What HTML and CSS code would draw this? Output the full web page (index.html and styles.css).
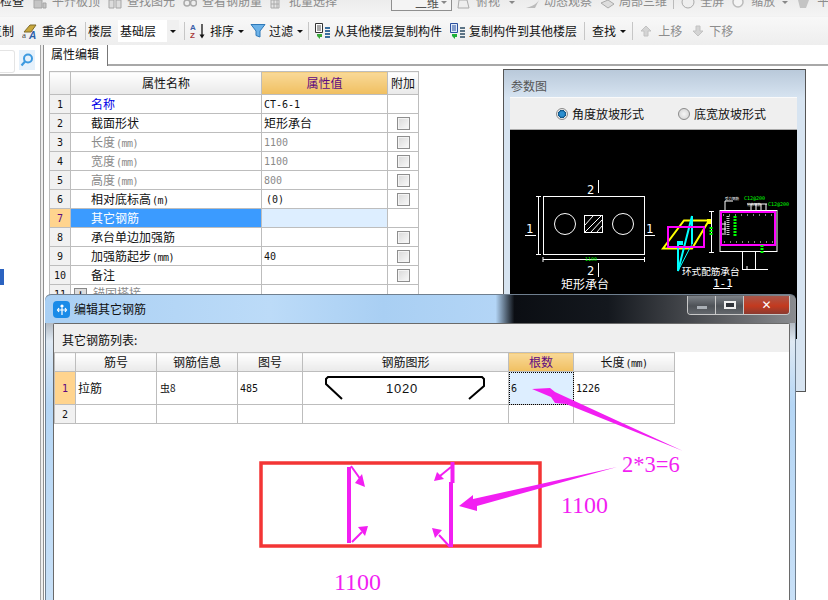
FILE: index.html
```html
<!DOCTYPE html>
<html lang="zh">
<head>
<meta charset="utf-8">
<title>属性编辑</title>
<link rel="stylesheet" href="styles.css">
</head>
<body>
<div class="page">
  <div class="bar-top">
    <span class="t1 dark">检查</span>
    <svg class="gi ml9" viewBox="0 0 14 9"><path d="M1 0h8v8H1zM10 3h3v5h-3z" fill="#c4c4c4" stroke="#a5a5a5"/></svg>
    <span class="t1 ml5">平齐板顶</span>
    <svg class="gi ml8" viewBox="0 0 14 9"><path d="M1 0h5v8H1zM8 0h5v8H8z" fill="#ddd" stroke="#a5a5a5"/></svg>
    <span class="t1 ml5">查找图元</span>
    <svg class="gi ml8" viewBox="0 0 14 9"><circle cx="4" cy="3" r="3" fill="none" stroke="#aaa" stroke-width="1.500"/><circle cx="10.500" cy="3" r="3" fill="none" stroke="#aaa" stroke-width="1.500"/></svg>
    <span class="t1 ml5">查看钢筋量</span>
    <svg class="gi ml8" viewBox="0 0 14 9"><path d="M1 0h8v8H1zM4 0v8M7 0v8M1 4h8" fill="#e4e4e4" stroke="#aaa"/></svg>
    <span class="t1 ml5">批量选择</span>
    <span class="drop-top"><span>二维</span><i class="caret grey"></i></span>
    <svg class="gi ml5" viewBox="0 0 14 9"><path d="M2 0h8l2 8H1z" fill="#eee" stroke="#aaa"/></svg>
    <span class="t1 ml5">俯视</span><i class="caret grey ml9"></i>
    <svg class="gi-w ml9" viewBox="0 0 17 9"><path d="M2 8C6 7 12 5 15 0l-4 8z" fill="#bbb"/></svg>
    <span class="t1 ml3">动态观察</span>
    <svg class="gi-w ml7" viewBox="0 0 17 9"><path d="M2 3 9 0l6 4-6 4z" fill="#ddd" stroke="#aaa"/></svg>
    <span class="t1 ml3">局部三维</span>
    <i class="sep-top"></i>
    <svg class="gi-w ml6" viewBox="0 0 17 9"><circle cx="8" cy="2" r="6" fill="#eee" stroke="#aaa"/></svg>
    <span class="t1 ml3">全屏</span>
    <svg class="gi-w ml7" viewBox="0 0 17 9"><circle cx="7" cy="2" r="5" fill="#f4f4f4" stroke="#bbb" stroke-width="1.500"/></svg>
    <span class="t1 ml3">缩放</span><i class="caret grey ml7"></i>
    <svg class="gi-w ml7" viewBox="0 0 17 9"><path d="M3 0h11l-3 8H5z" fill="#c4c4c4"/></svg>
    <span class="t1 ml5">平移</span>
  </div>

  <div class="bar-tools">
    <span class="clip">复制</span>
    <svg class="ic ml8" viewBox="0 0 16 16"><path d="M2 9 8 2h6l-5 7z" fill="#c9a83c" stroke="#7d6a2a"/><text x="0" y="15" class="ic-a">a</text><text x="7" y="15.500" class="ic-b">A</text></svg>
    <span class="ml4">重命名</span>
    <i class="sep"></i>
    <span class="ml2">楼层</span>
    <span class="combo"><span class="combo-txt">基础层</span><span class="combo-btn"><i class="caret"></i></span></span>
    <i class="sep sep-a"></i>
    <svg class="ic-sort ml5" viewBox="0 0 18 16"><text x="0" y="7" class="az-a">A</text><text x="0" y="15" class="az-z">Z</text><path d="M12 1v12" stroke="#111" stroke-width="1.300"/><path d="M9.500 11.500 12 15.500l2.500-4z" fill="#111"/></svg>
    <span class="ml2">排序</span><i class="caret ml4"></i>
    <svg class="ic ml6" viewBox="0 0 16 16"><path d="M1 1.500h14L10 8v6l-4-1.500V8z" fill="#6cb2e8" stroke="#2f79b8"/></svg>
    <span class="ml3">过滤</span><i class="caret ml4"></i>
    <i class="sep sep-a"></i>
    <svg class="ic-copy ml5" viewBox="0 0 18 18"><path d="M1.500 1.500h7v9h-7z" fill="#fff" stroke="#333"/><path d="M3 4h4M3 6h4M3 8h4" stroke="#555"/><path d="M3 12h5v3H6v2l-3-3z" fill="#3aa83a"/><path d="M11 6h5M11 9h5M11 12h5M11 15h5" stroke="#3c6f9e" stroke-width="2"/></svg>
    <span class="ml2">从其他楼层复制构件</span>
    <svg class="ic-copy ml7" viewBox="0 0 18 18"><path d="M1.500 1.500h7v9h-7z" fill="#dfeaf8" stroke="#2b4f9e"/><path d="M3 4h4M3 6h4M3 8h4" stroke="#2b4f9e"/><path d="M3 12h5v3H6v2l-3-3z" fill="#1fae3a"/><path d="M11 6h5M11 9h5M11 12h5M11 15h5" stroke="#5c7486" stroke-width="2"/></svg>
    <span class="ml2">复制构件到其他楼层</span>
    <i class="sep"></i>
    <span class="ml7">查找</span><i class="caret ml4"></i>
    <i class="sep sep-b"></i>
    <svg class="ic-arrow ml7" viewBox="0 0 12 12"><path d="M6 1 11 6H8v5H4V6H1z" fill="#d4d4d4" stroke="#c2c2c2"/></svg>
    <span class="ml6 dim">上移</span>
    <svg class="ic-arrow ml10" viewBox="0 0 12 12"><path d="M6 11 1 6h3V1h4v5h3z" fill="#d4d4d4" stroke="#c2c2c2"/></svg>
    <span class="ml5 dim">下移</span>
  </div>

  <div class="main">
    <aside class="side">
      <div class="search">
        <span class="search-box"></span>
        <span class="search-btn"><svg viewBox="0 0 14 14" class="ic-search"><circle cx="8" cy="5.500" r="4" fill="none" stroke="#3d9ae0" stroke-width="2"/><path d="M5 8.500 1.500 12.500" stroke="#3d9ae0" stroke-width="2.200"/></svg></span>
      </div>
      <div class="tree"><span class="tree-sel"></span></div>
    </aside>
    <div class="splitter"></div>
    <section class="work">
      <div class="tabs"><span class="tab">属性编辑</span><span class="tab-rest"></span></div>
      <div class="pane">
        <table class="props">
          <colgroup><col class="pc0"><col class="pc1"><col class="pc2"><col class="pc3"></colgroup>
          <tr class="head"><th></th><th>属性名称</th><th class="hot">属性值</th><th>附加</th></tr>
          <tr><td class="num">1</td><td class="nm blue">名称</td><td class="val">CT-6-1</td><td></td></tr>
          <tr><td class="num">2</td><td class="nm">截面形状</td><td class="val-cn">矩形承台</td><td class="chk"><i class="cb"></i></td></tr>
          <tr class="off"><td class="num">3</td><td class="nm">长度<small>(mm)</small></td><td class="val">1100</td><td class="chk"><i class="cb"></i></td></tr>
          <tr class="off"><td class="num">4</td><td class="nm">宽度<small>(mm)</small></td><td class="val">1100</td><td class="chk"><i class="cb"></i></td></tr>
          <tr class="off"><td class="num">5</td><td class="nm">高度<small>(mm)</small></td><td class="val">800</td><td class="chk"><i class="cb"></i></td></tr>
          <tr><td class="num">6</td><td class="nm">相对底标高<small>(m)</small></td><td class="val val-in">(0)</td><td class="chk"><i class="cb"></i></td></tr>
          <tr class="sel"><td class="num">7</td><td class="nm">其它钢筋</td><td class="val"></td><td></td></tr>
          <tr><td class="num">8</td><td class="nm">承台单边加强筋</td><td class="val"></td><td class="chk"><i class="cb"></i></td></tr>
          <tr><td class="num">9</td><td class="nm">加强筋起步<small>(mm)</small></td><td class="val">40</td><td class="chk"><i class="cb"></i></td></tr>
          <tr><td class="num">10</td><td class="nm">备注</td><td class="val"></td><td class="chk"><i class="cb"></i></td></tr>
          <tr class="off"><td class="num">11</td><td class="nm2"><i class="plus">+</i>锚固搭接</td><td class="val"></td><td></td></tr>
        </table>

        <div class="param">
          <div class="param-title">参数图</div>
          <div class="param-radio">
            <span class="radio on"></span><span>角度放坡形式</span>
            <span class="radio r2"></span><span>底宽放坡形式</span>
          </div>
          <svg class="cad" viewBox="510 129 287 209">
            <g fill="none" stroke="#fff" stroke-width="1">
              <rect x="543.500" y="195.500" width="101" height="58"/>
              <circle cx="565" cy="223" r="10.500"/>
              <circle cx="623" cy="223" r="10.500"/>
              <rect x="584.500" y="214.500" width="18" height="17"/>
              <path d="M585 224l8-9M585 231l16-16M591 231l11-12M597 231l5-6"/>
              <path d="M598.500 179v13M598.500 262v14M525 234.500h11M645 234.500h10"/>
              <path d="M538.500 195v58M536 195.500h5M536 253.500h5M543 258.500h102M543 256v5M644.500 256v5"/>
              <rect x="720" y="209.500" width="57" height="41"/>
              <path d="M711.500 210v42M709 210.500h5M709 251.500h5M742.500 250v18M755.500 250v18M742 268.500h26M747 268v-3"/>
              <path d="M725 200h8M725 200v10M747 203h20M751 203v6M756 203v6M761 203v6M766 203v6"/>
              <path d="M725 232v-12M726 223h-6M726 228h-6M726 233h-6"/>
              <path d="M713 287.500h17"/>
            </g>
            <path d="M684 219.500h25l-17 28h-29z" fill="none" stroke="#ff0" stroke-width="2"/>
            <rect x="707" y="218" width="4" height="5" fill="#ff0"/>
            <path d="M692 215v28M692 215 678 270v-27" fill="none" stroke="#0ff" stroke-width="2"/>
            <path d="M692 243 678 270" stroke="#0ff" stroke-width="1"/>
            <rect x="677" y="240" width="6" height="4" fill="#0ff"/>
            <rect x="668" y="226" width="36" height="20" fill="none" stroke="#f0f" stroke-width="2"/>
            <rect x="721" y="211" width="54" height="33" fill="none" stroke="#f0f" stroke-width="2"/>
            <path d="M723 214h50M724 241h50" stroke="#fff" stroke-width="1" stroke-dasharray="1 5"/>
            <path d="M711 226v8" stroke="#0f0" stroke-width="3" stroke-dasharray="2 1"/>
            <path d="M735 215v20" stroke="#0f0" stroke-width="3" stroke-dasharray="2 1"/>
            <path d="M728 215v20" stroke="#ccc" stroke-width="3" stroke-dasharray="1 1"/>
            <path d="M762 244v8" stroke="#0f0" stroke-width="3" stroke-dasharray="2 1"/>
            <g class="cad-text">
              <text x="587" y="193" class="c-lg">2</text>
              <text x="587" y="274" class="c-lg">2</text>
              <text x="526" y="232" class="c-lg">1</text>
              <text x="646" y="232" class="c-lg">1</text>
              <text x="561" y="288" class="c-cn">矩形承台</text>
              <text x="682" y="274" class="c-cn2">环式配筋承台</text>
              <text x="713" y="286" class="c-md">1-1</text>
              <text x="725" y="199" class="c-xs">受力钢筋</text>
              <text x="747" y="205" class="c-xs">分布钢筋</text>
              <text x="585" y="260" class="c-gr">1100</text>
              <text x="744" y="199" class="c-gr">C12@200</text>
              <text x="768" y="205" class="c-gr">C12@200</text>
            </g>
          </svg>
        </div>
      </div>
    </section>
  </div>

  <div class="dialog">
    <div class="dlg-title">
      <span class="dlg-ico"><svg viewBox="0 0 14 14" class="ic-dlg"><path d="M7 2v10M2.500 7h9M4 5 2.500 7 4 9M10 5l1.500 2L10 9M5.500 3.500 7 2l1.500 1.500" fill="none" stroke="#fff" stroke-width="1.200"/></svg></span>
      <span class="dlg-name">编辑其它钢筋</span>
      <span class="win-btns">
        <span class="wb"><i class="wb-min"></i></span>
        <span class="wb"><i class="wb-max"></i></span>
        <span class="wb wb-close">✕</span>
      </span>
    </div>
    <div class="dlg-body">
      <div class="dlg-label">其它钢筋列表:</div>
      <table class="bars">
        <colgroup><col class="bc0"><col class="bc1"><col class="bc2"><col class="bc3"><col class="bc4"><col class="bc5"><col class="bc6"></colgroup>
        <tr class="bars-head"><th></th><th>筋号</th><th>钢筋信息</th><th>图号</th><th>钢筋图形</th><th class="hot">根数</th><th>长度<small>(mm)</small></th></tr>
        <tr class="bars-r1">
          <td class="num cur">1</td><td class="cn">拉筋</td><td class="grade">虫8</td><td class="mono">485</td>
          <td class="shape"><svg viewBox="303 372 205 32" class="shape-svg"><path d="M469 399 484 386v-7l-2-2H328l-2 2v5l16 15" fill="none" stroke="#000" stroke-width="2"/><text x="386" y="393" class="shape-t">1020</text></svg></td>
          <td class="mono focus">6</td><td class="mono">1226</td>
        </tr>
        <tr class="bars-r2"><td class="num">2</td><td></td><td></td><td></td><td></td><td></td><td></td></tr>
      </table>
    </div>
  </div>

  <svg class="notes" viewBox="0 0 828 600">
    <rect x="261" y="463" width="279" height="83" class="n-box"/>
    <path d="M349 467v76M451 482v65M452.500 462v21" class="n-line"/>
    <path d="M351 466 361 480M352 542 362 532M451 467 440 476M450 547 439 535" class="n-shaft"/>
    <g class="n-fill">
      <path d="M365 487 355 483 362 474z"/>
      <path d="M368 526 358 527 365 536z"/>
      <path d="M434 481 437 472 444 479z"/>
      <path d="M432 528 442 530 435 538z"/>
      <path d="M459 506 473 495 473 499 617 467 477 506 477 511z"/>
      <path d="M532 389 550 388 555 392 683 451 566 404 555 403 551 397z"/>
    </g>
    <text x="622" y="472" class="n-t1">2*3=6</text>
    <text x="561" y="513" class="n-t2">1100</text>
    <text x="334" y="590" class="n-t2">1100</text>
  </svg>
</div>
</body>
</html>
```
FILE: styles.css
```css
* { box-sizing: border-box; }
html, body { margin: 0; padding: 0; }
body { font: 12px/1 "Noto Sans CJK SC", "Liberation Sans", sans-serif; color: #111; background: #fff; }
.page { position: relative; width: 828px; height: 600px; overflow: hidden; display: flex; flex-direction: column; }

/* clipped upper toolbar */
.bar-top { flex: none; height: 17px; display: flex; align-items: flex-start; overflow: hidden; background: linear-gradient(#ececec, #f4f4f4); color: #8c8c8c; white-space: nowrap; border-bottom: 1px solid #f2f2f2; }
.t1 { display: block; flex: none; margin-top: -5px; line-height: 12px; }
.t1.dark { color: #222; }
.gi { width: 14px; height: 9px; flex: none; }
.gi-w { width: 17px; height: 9px; flex: none; }
.sep-top { width: 1px; height: 9px; background: #bbb; margin-left: 6px; flex: none; }
.drop-top { width: 61px; height: 12px; margin: -1px 0 0 54px; padding: 0 4px 0 23px; display: flex; justify-content: space-between; align-items: flex-start; line-height: 6px; border: 1px solid #8f8f8f; background: #f4f4f4; color: #555; flex: none; }
.caret.grey { border-top-color: #888; align-self: flex-start; margin-top: 1px; }

/* lower toolbar */
.bar-tools { flex: none; height: 28px; display: flex; align-items: center; white-space: nowrap; background: linear-gradient(#f8f8f8, #eeeeee); }
.clip { margin-left: -10px; }
.ic { width: 16px; height: 16px; flex: none; }
.ic-sort { width: 18px; height: 16px; flex: none; }
.ic-copy { width: 18px; height: 18px; flex: none; }
.ic-arrow { width: 12px; height: 12px; flex: none; }
.ic-a { font: 9px "Liberation Serif", serif; fill: #444; }
.ic-b { font: italic bold 10px "Liberation Sans", sans-serif; fill: #2b5ea8; }
.az-a { font: bold 8px "Liberation Sans", sans-serif; fill: #3a5fa8; }
.az-z { font: bold 8px "Liberation Sans", sans-serif; fill: #a83a3a; }
.ml2 { margin-left: 2px; } .ml3 { margin-left: 3px; } .ml4 { margin-left: 4px; } .ml5 { margin-left: 5px; }
.ml6 { margin-left: 6px; } .ml7 { margin-left: 7px; } .ml8 { margin-left: 8px; } .ml9 { margin-left: 9px; } .ml10 { margin-left: 10px; }
.sep { width: 1px; height: 18px; background: #c6c6c6; margin-left: 7px; flex: none; }
.sep-a { margin-left: 5px; }
.sep-b { margin-left: 6px; }
.caret { width: 0; height: 0; flex: none; border: 3px solid transparent; border-top: 3px solid #111; border-bottom: 0; display: inline-block; }
.combo { width: 61px; height: 22px; margin-left: 6px; display: flex; align-items: center; background: #fff; flex: none; }
.combo-txt { flex: 1; padding-left: 2px; }
.combo-btn { width: 12px; height: 100%; background: #f0f0f0; display: flex; align-items: center; justify-content: center; }
.dim { color: #8d8d8d; }

/* main area */
.main { flex: 1; display: flex; min-height: 0; }
.side { width: 40px; flex: none; display: flex; flex-direction: column; }
.search { height: 31px; border-bottom: 2px solid #b5b5b5; padding-top: 5px; display: flex; align-items: flex-start; }
.search-box { width: 15px; height: 23px; background: #fff; border: 1px solid #e4e4e4; border-left: 0; border-radius: 0 3px 3px 0; }
.search-btn { margin-left: 4px; width: 16px; height: 20px; background: #e6f1fb; display: flex; align-items: center; justify-content: center; }
.ic-search { width: 14px; height: 14px; }
.tree { flex: 1; padding-top: 193px; }
.tree-sel { display: block; width: 4px; height: 16px; background: #2b63c0; }
.splitter { width: 4px; flex: none; background: #eeeeee; border-left: 1px solid #a5a5a5; border-right: 1px solid #8f8f8f; }
.work { flex: 1; min-width: 0; display: flex; flex-direction: column; }
.tabs { height: 21px; flex: none; display: flex; }
.tab { width: 64px; height: 21px; padding: 3px 0 0 7px; background: #fff; border-right: 1px solid #777; }
.tab-rest { flex: 1; border-bottom: 2px solid #a8a8a8; }
.pane { flex: 1; display: flex; align-items: flex-start; padding: 2px 0 0 5px; }

/* property table */
table { border-collapse: collapse; table-layout: fixed; }
.props { margin-top: 3px; width: 369px; flex: none; }
.pc0 { width: 21px; } .pc1 { width: 191px; } .pc2 { width: 126px; } .pc3 { width: 31px; }
.props th, .props td, .bars th, .bars td { border: 1px solid #bdbdbd; padding: 0; overflow: hidden; white-space: nowrap; }
.props tr { height: 19px; }
.props tr.head { height: 23px; }
th { font-weight: 400; text-align: center; background: linear-gradient(#fff, #e9e9e9); }
th.hot { background: linear-gradient(#f9d998, #f0bf60); color: #5e0a80; }
.num { background: #f1f1f1; text-align: center; font: 10px "DejaVu Sans Mono", monospace; }
.nm { padding-left: 20px !important; }
.nm2 { padding-left: 3px !important; }
.blue { color: #0000e6; }
.val { padding-left: 2px !important; font: 10px "DejaVu Sans Mono", monospace; }
.val-cn { padding-left: 2px !important; }
.val-in { padding-left: 4px !important; }
small { font: 10px "DejaVu Sans Mono", monospace; letter-spacing: -0.5px; margin-left: 1px; }
.off td { color: #8a8a8a; }
.off .num { color: #111; }
.sel .num { background: #ffd48e; color: #5e0a80; }
.sel .nm { background: #3b9bff; color: #fff; }
.sel .val { background: #ddeeff; }
.chk { text-align: center; line-height: 0; }
.cb { display: inline-block; width: 13px; height: 13px; border: 1px solid #8e8e8e; background: linear-gradient(135deg, #d9d9d9, #fafafa); box-shadow: inset 0 0 0 1px #f4f4f4; }
.plus { display: inline-block; width: 13px; height: 13px; margin-right: 6px; border: 1px solid #888; background: #ddd; color: #111; font: bold 11px/11px "Liberation Sans", sans-serif; text-align: center; }

/* parameter panel */
.param { width: 303px; height: 323px; margin: 1px 0 0 84px; flex: none; padding: 0 8px 0 6px; border: 1px solid #555; background: linear-gradient(#b9c9da, #d7e4f1 28px, #d7e4f1); }
.param-title { height: 27px; padding: 10px 0 0 1px; color: #555; }
.param-radio { height: 33px; display: flex; align-items: center; padding-left: 46px; background: #efefef; border-top: 1px solid #fafafa; border-bottom: 1px solid #aaa; }
.radio { width: 12px; height: 12px; border-radius: 50%; margin-right: 4px; border: 1px solid #8a8a8a; background: radial-gradient(#f5f5f5, #cfcfcf); flex: none; }
.radio.on { background: radial-gradient(#2c8fd0 30%, #0c4f80 55%, #e8e8e8 60%); }
.radio.r2 { margin-left: 34px; }
.cad { display: block; width: 287px; height: 209px; background: #000; }
.cad-text text { fill: #fff; }
.c-lg { font: 12px "DejaVu Sans Mono", monospace; }
.c-md { font: 11px "DejaVu Sans Mono", monospace; }
.c-cn { font-size: 12px; }
.c-cn2 { font-size: 9.600px; }
.c-xs { font-size: 3.500px; }
.cad-text .c-gr { font: 5px "DejaVu Sans Mono", monospace; fill: #0f0; }

/* dialog window */
.dialog { position: absolute; left: 45px; top: 294px; width: 751px; height: 306px; border-radius: 6px 6px 0 0; border: 1px solid #6f7f8f; border-bottom: 0; background: linear-gradient(#6d7177, #dfe9f3 46px, #b5d6f5 110px, #c8e0f7); display: flex; flex-direction: column; }
.dlg-title { height: 28px; flex: none; display: flex; align-items: flex-start; margin: 0 -1px; border-radius: 6px 6px 0 0; background: linear-gradient(90deg, #a9cff3, #bcdbf8 30%, #a9cff3 45%, #b3d5f6 60%, #0b0e13 62.500%, #14181e 75%, #5a5c60 90%, #8a8c90 100%); }
.dlg-ico { width: 17px; height: 17px; margin: 6px 0 0 8px; border-radius: 4px; background: #1a8be8; display: flex; align-items: center; justify-content: center; flex: none; }
.ic-dlg { width: 14px; height: 14px; }
.dlg-name { margin: 8px 0 0 4px; }
.win-btns { margin: 1px 6px 0 auto; height: 19px; width: 103px; display: flex; border: 1px solid #c8c8c8; border-top: 0; border-radius: 0 0 4px 4px; overflow: hidden; }
.wb { width: 28px; flex: none; display: flex; align-items: center; justify-content: center; border-right: 1px solid #c8c8c8; background: linear-gradient(#7d8288, #4e5257 55%, #63676c); }
.wb-min { width: 10px; height: 3px; background: #aab0b6; margin-top: 5px; }
.wb-max { width: 12px; height: 8px; border: 2px solid #f0f0f0; background: #30343a; }
.wb-close { flex: 1; border: 0; color: #fff; font: bold 12px "DejaVu Sans", sans-serif; background: linear-gradient(#a8564a, #c33a1f 55%, #8a3a30); }
.dlg-body { flex: 1; margin: 0 5px 0 7px; background: #fff; border: 1px solid #6a6a6a; border-bottom: 0; border-radius: 2px 2px 0 0; }
.dlg-label { height: 28px; padding: 10px 0 0 8px; background: #efefef; }
.bars { width: 620px; }
.bc0 { width: 21px; } .bc1 { width: 81px; } .bc2 { width: 81px; } .bc3 { width: 65px; }
.bc4 { width: 206px; } .bc5 { width: 65px; } .bc6 { width: 101px; }
.bars-head { height: 19px; } .bars-r1 { height: 33px; } .bars-r2 { height: 19px; }
.cur { background: #ffd48e; color: #5e0a80; }
.cn { padding-left: 2px !important; }
.mono { padding-left: 2px !important; font: 10px "DejaVu Sans Mono", monospace; }
.grade { padding-left: 3px !important; font-size: 10px; }
.shape { line-height: 0; }
.shape-svg { display: block; width: 205px; height: 32px; }
.shape-t { font: 13px "Liberation Sans", sans-serif; letter-spacing: 0.800px; fill: #111; }
.bars td.focus { background: #ddeeff; outline: 1px dotted #000; outline-offset: -1px; }

/* hand annotations laid over the dialog */
.notes { position: absolute; left: 0; top: 0; width: 828px; height: 600px; pointer-events: none; }
.n-box { fill: none; stroke: #f33535; stroke-width: 3.500; }
.n-line { fill: none; stroke: #f21ff2; stroke-width: 4; }
.n-shaft { fill: none; stroke: #f21ff2; stroke-width: 2; }
.n-fill { fill: #f21ff2; }
.n-t1 { font: 22.500px "Liberation Serif", serif; fill: #f21ff2; }
.n-t2 { font: 24px "Liberation Serif", serif; fill: #f21ff2; }
```
